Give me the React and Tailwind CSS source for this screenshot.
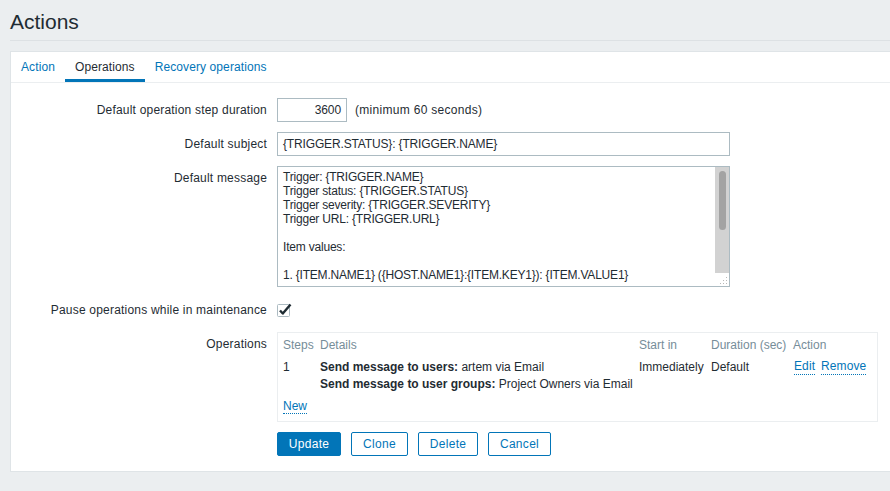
import { useState } from 'react';

const FONT = { fontFamily: '"Liberation Sans", Arial, sans-serif' };

const MESSAGE = [
  'Trigger: {TRIGGER.NAME}',
  'Trigger status: {TRIGGER.STATUS}',
  'Trigger severity: {TRIGGER.SEVERITY}',
  'Trigger URL: {TRIGGER.URL}',
  '',
  'Item values:',
  '',
  '1. {ITEM.NAME1} ({HOST.NAME1}:{ITEM.KEY1}): {ITEM.VALUE1}',
];

function Row({ label, children, className = '' }) {
  return (
    <div className={`flex ${className}`}>
      <div className="w-[256px] shrink-0 text-right pt-[5px] leading-[14px] tracking-[0.2px]">{label}</div>
      <div className="ml-[10px] flex-1">{children}</div>
    </div>
  );
}

function Button({ children, primary, w }) {
  return (
    <button
      className={
        primary
          ? `${w} h-[24px] rounded-[2px] bg-[#0275b8] border border-[#0275b8] text-white text-[12px] tracking-[0.3px]`
          : `${w} h-[24px] rounded-[2px] bg-white border border-[#0275b8] text-[#0275b8] text-[12px] tracking-[0.3px]`
      }
    >
      {children}
    </button>
  );
}

export default function App() {
  const [tab] = useState('Operations');
  const tabs = ['Action', 'Operations', 'Recovery operations'];

  return (
    <div className="min-h-screen bg-[#ebeef0] text-[#1f2c33] text-[12px] overflow-hidden" style={FONT}>
      <div className="ml-[10px] h-[41px] border-b border-[#dde1e4] flex items-center">
        <h1 className="text-[21px] leading-none text-[#1f2c33] mt-[3px]">Actions</h1>
      </div>

      <div className="ml-[10px] mt-[10px] bg-white border-l border-t border-b border-[#dfe4e7] pb-[15px]">
        <div className="flex h-[31px] border-b border-[#ebeef0]">
          {tabs.map((t) => (
            <div
              key={t}
              className={
                t === tab
                  ? 'px-[10px] flex items-center text-[#1f2c33] border-b-[3px] border-[#0275b8] pt-[3px] tracking-[0.1px]'
                  : 'px-[10px] flex items-center text-[#0275b8] tracking-[0.1px]'
              }
            >
              {t}
            </div>
          ))}
        </div>

        <div className="pt-[15px] flex flex-col gap-[10px]">
          <Row label="Default operation step duration">
            <div className="flex items-center">
              <div className="w-[70px] h-[24px] border border-[#acbbc2] text-right pr-[5px] leading-[22px] tracking-[-0.1px]">3600</div>
              <span className="ml-[8px] tracking-[0.3px]">(minimum 60 seconds)</span>
            </div>
          </Row>

          <Row label="Default subject">
            <div className="w-[453px] h-[24px] border border-[#acbbc2] pl-[5px] leading-[22px] tracking-[-0.15px]">
              {'{TRIGGER.STATUS}: {TRIGGER.NAME}'}
            </div>
          </Row>

          <Row label="Default message">
            <div className="relative w-[453px] h-[121px] border border-[#acbbc2] overflow-hidden">
              <div className="pl-[5px] pt-[3px] leading-[14px] whitespace-pre tracking-[-0.2px]">
                {MESSAGE.map((l, i) => (
                  <div key={i} className="h-[14px]">{l}</div>
                ))}
              </div>
              <div className="absolute right-0 top-0 w-[14px] h-[106px] bg-[#d2d2d2] flex justify-center pt-[4px]">
                <div className="w-[7px] h-[59px] rounded-full bg-[#a3a3a3]" />
              </div>
              <svg className="absolute right-[1px] bottom-[1px]" width="10" height="10" viewBox="0 0 10 10">
                <g fill="#b8b8b8">
                  <rect x="8" y="2" width="1" height="1" />
                  <rect x="5" y="5" width="1" height="1" />
                  <rect x="8" y="5" width="1" height="1" />
                  <rect x="2" y="8" width="1" height="1" />
                  <rect x="5" y="8" width="1" height="1" />
                  <rect x="8" y="8" width="1" height="1" />
                </g>
              </svg>
            </div>
          </Row>

          <Row label="Pause operations while in maintenance" className="mt-[1px]">
            <div className="h-[24px] flex items-center">
              <svg width="15" height="14" viewBox="0 0 15 14">
                <rect x="0.5" y="1.5" width="12" height="12" rx="1" fill="#fff" stroke="#acbbc2" />
                <path d="M3 7.5 L5.8 10.5 L13.5 1.5" fill="none" stroke="#1f2c33" strokeWidth="2.4" strokeLinejoin="round" />
              </svg>
            </div>
          </Row>

          <Row label="Operations">
            <div className="w-[601px] border border-[#ebeef0] px-[5px] pt-[5px] pb-[8px]">
              <div className="grid grid-cols-[37px_319px_72px_82px_1fr] leading-[14px] text-[#768d99]">
                <div>Steps</div>
                <div>Details</div>
                <div>Start in</div>
                <div>Duration (sec)</div>
                <div>Action</div>
              </div>
              <div className="grid grid-cols-[37px_319px_72px_82px_1fr] leading-[17px] mt-[7px]">
                <div>1</div>
                <div>
                  <div><b>Send message to users:</b> artem via Email</div>
                  <div><b>Send message to user groups:</b> Project Owners via Email</div>
                </div>
                <div>Immediately</div>
                <div>Default</div>
                <div className="flex gap-[6px] text-[#0275b8] ml-[1px] tracking-[0.1px]">
                  <span className="border-b border-dotted border-[#0275b8] leading-[15px] h-[16px]">Edit</span>
                  <span className="border-b border-dotted border-[#0275b8] leading-[15px] h-[16px]">Remove</span>
                </div>
              </div>
              <div className="mt-[6px] leading-[14px]">
                <span className="text-[#0275b8] border-b border-dotted border-[#0275b8]">New</span>
              </div>
            </div>
          </Row>

          <div className="flex gap-[10px] ml-[266px]">
            <Button primary w="w-[64px]">Update</Button>
            <Button w="w-[57px]">Clone</Button>
            <Button w="w-[60px]">Delete</Button>
            <Button w="w-[63px]">Cancel</Button>
          </div>
        </div>
      </div>
    </div>
  );
}
